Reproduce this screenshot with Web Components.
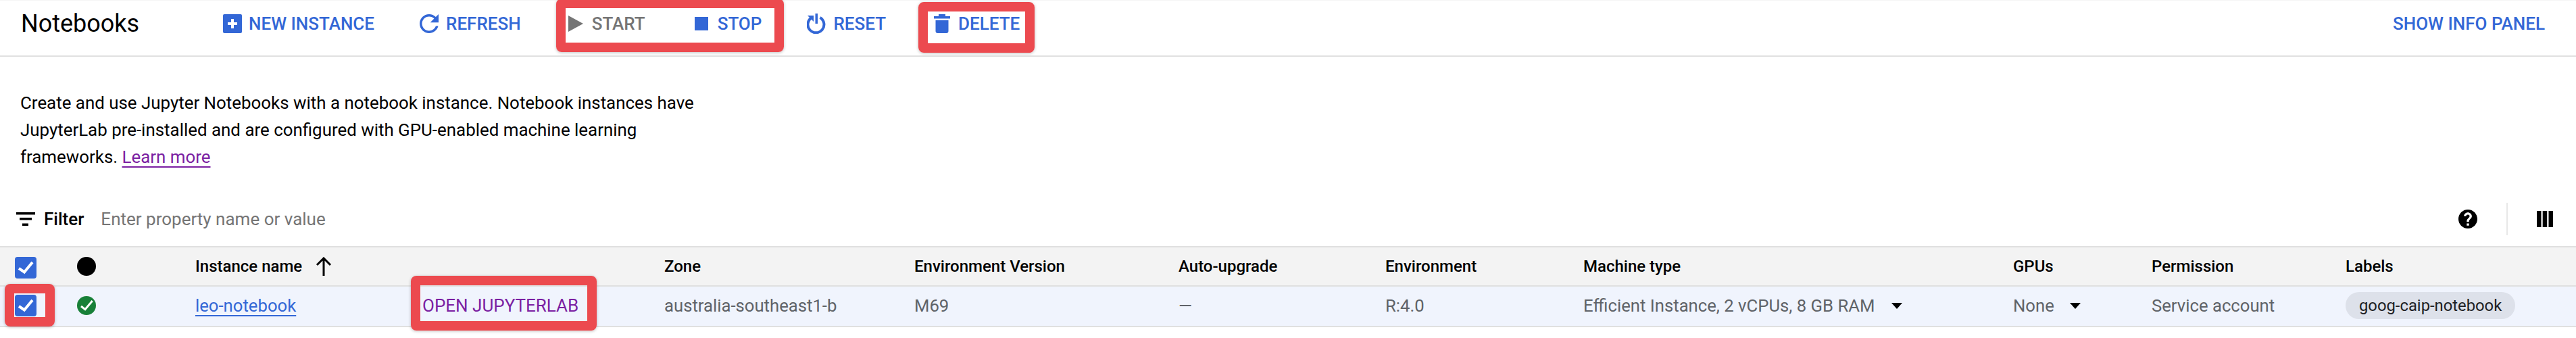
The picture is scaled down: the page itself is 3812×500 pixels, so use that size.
<!DOCTYPE html>
<html>
<head>
<meta charset="utf-8">
<title>Notebooks</title>
<style>
    html, body { margin: 0; padding: 0; background: #fff; }
    body { font-family: Roboto, "Liberation Sans", sans-serif; }
</style>
</head>
<body>
<notebooks-page>
    <np-toolbar>
        <np-action style="gap: 10px">
            <svg slot="icon" width="28" height="28" viewBox="0 0 28 28"><rect width="28" height="28" rx="2" fill="#3367d6"/><path d="M12 7h4v5h5v4h-5v5h-4v-5H7v-4h5z" fill="#fff"/></svg>
            NEW INSTANCE
        </np-action>
        <np-action style="margin-left: 67px">
            <svg slot="icon" width="28" height="28" viewBox="4 4 16 16"><path fill="#3367d6" d="M17.65 6.35C16.2 4.9 14.21 4 12 4c-4.42 0-7.99 3.58-7.99 8s3.57 8 7.99 8c3.73 0 6.84-2.55 7.73-6h-2.08c-.82 2.33-3.04 4-5.65 4-3.31 0-6-2.69-6-6s2.69-6 6-6c1.66 0 3.14.69 4.22 1.78L13 11h7V4l-2.35 2.35z"/></svg>
            REFRESH
        </np-action>
        <np-action disabled style="margin-left: 70px; gap: 13px">
            <svg slot="icon" width="22" height="24" viewBox="0 0 22 24"><path fill="#757575" d="M0 0l22 12L0 24z"/></svg>
            START
        </np-action>
        <np-action style="margin-left: 73px; gap: 14px">
            <svg slot="icon" width="20" height="20" viewBox="0 0 20 20"><rect width="20" height="20" fill="#3367d6"/></svg>
            STOP
        </np-action>
        <np-action style="margin-left: 67px">
            <svg slot="icon" width="28" height="30" viewBox="0 0 28 30"><path d="M19.5 6A12 12 0 1 1 7 6.2" fill="none" stroke="#3367d6" stroke-width="4"/><rect x="12.5" width="3.5" height="15" fill="#3367d6"/><path d="M1 3h9v9z" fill="#3367d6"/></svg>
            RESET
        </np-action>
        <np-action style="margin-left: 71px; gap: 12px">
            <svg slot="icon" width="24" height="28" viewBox="0 0 24 28"><path fill="#3367d6" d="M7 0h10v3h7v3.5H0V3h7zM2.5 9h19v16a3 3 0 0 1-3 3h-13a3 3 0 0 1-3-3z"/></svg>
            DELETE
        </np-action>
        <np-action slot="end">SHOW INFO PANEL</np-action>
    </np-toolbar>

    <np-intro>
        Create and use Jupyter Notebooks with a notebook instance. Notebook instances have<br>
        JupyterLab pre-installed and are configured with GPU-enabled machine learning<br>
        frameworks. <a href="#">Learn more</a>
    </np-intro>

    <np-filter></np-filter>

    <np-row head>
        <np-cell><np-check style="margin-top: 4px"></np-check></np-cell>
        <np-cell><np-status></np-status></np-cell>
        <np-cell>Instance name<svg width="24" height="28" viewBox="0 0 24 28" style="margin-left: 20px"><path d="M12 28V2M2 12L12 2l10 10" fill="none" stroke="#000" stroke-width="3"/></svg></np-cell>
        <np-cell></np-cell>
        <np-cell>Zone</np-cell>
        <np-cell>Environment Version</np-cell>
        <np-cell>Auto-upgrade</np-cell>
        <np-cell>Environment</np-cell>
        <np-cell>Machine type</np-cell>
        <np-cell>GPUs</np-cell>
        <np-cell>Permission</np-cell>
        <np-cell>Labels</np-cell>
    </np-row>
    <np-row>
        <np-cell><np-check></np-check></np-cell>
        <np-cell><np-status ok></np-status></np-cell>
        <np-cell><a href="#" style="color: #3367d6; text-decoration-thickness: 2px; text-underline-offset: 5px">leo-notebook</a></np-cell>
        <np-cell style="color: #7b1fa2; font-size: 26px">OPEN JUPYTERLAB</np-cell>
        <np-cell>australia-southeast1-b</np-cell>
        <np-cell>M69</np-cell>
        <np-cell>—</np-cell>
        <np-cell>R:4.0</np-cell>
        <np-cell>Efficient Instance, 2 vCPUs, 8 GB RAM<np-caret style="margin-left: 24px"></np-caret></np-cell>
        <np-cell>None<np-caret style="margin-left: 23px"></np-caret></np-cell>
        <np-cell>Service account</np-cell>
        <np-cell><np-chip>goog-caip-notebook</np-chip></np-cell>
    </np-row>

    <np-mark x="823" y="-2" w="337" h="79"></np-mark>
    <np-mark x="1359" y="3" w="172" h="75"></np-mark>
    <np-mark x="7" y="420" w="74" h="63"></np-mark>
    <np-mark x="608" y="408" w="275" h="81"></np-mark>
</notebooks-page>

<script>
class NotebooksPage extends HTMLElement {
    constructor() {
        super();
        this.attachShadow({ mode: "open" }).innerHTML = `
        <style>
            :host {
                display: block;
                position: relative;
                width: 3812px;
                height: 500px;
                overflow: hidden;
                font-family: Roboto, "Liberation Sans", sans-serif;
                font-size: 26px;
                color: #000;
            }
        </style>
        <slot></slot>
        `;
    }
}
customElements.define("notebooks-page", NotebooksPage);

class Toolbar extends HTMLElement {
    constructor() {
        super();
        this.attachShadow({ mode: "open" }).innerHTML = `
        <style>
            :host {
                display: flex;
                align-items: center;
                height: 67px;
                padding: 0 46px 14px 31px;
                border-top: 1px solid #f5f5f5;
                border-bottom: 2px solid #e0e0e0;
            }
            h1 {
                width: 299px;
                margin: 0;
                font-size: 36px;
                font-weight: 400;
                flex: none;
            }
            #end { margin-left: auto; }
        </style>
        <h1>Notebooks</h1>
        <slot></slot>
        <div id="end"><slot name="end"></slot></div>
        `;
    }
}
customElements.define("np-toolbar", Toolbar);

class Action extends HTMLElement {
    constructor() {
        super();
        this.attachShadow({ mode: "open" }).innerHTML = `
        <style>
            :host {
                display: inline-flex;
                align-items: center;
                gap: 11px;
                font-size: 26px;
                font-weight: 500;
                color: #3367d6;
                white-space: nowrap;
            }
            :host([disabled]) { color: #757575; }
            ::slotted(svg) { display: block; flex: none; }
        </style>
        <slot name="icon"></slot>
        <span><slot></slot></span>
        `;
    }
}
customElements.define("np-action", Action);

class Intro extends HTMLElement {
    constructor() {
        super();
        this.attachShadow({ mode: "open" }).innerHTML = `
        <style>
            :host {
                display: block;
                width: 1020px;
                padding: 48px 0 48px 30px;
                line-height: 40px;
                font-size: 25.900px;
            }
            ::slotted(a) { color: #7b1fa2; text-decoration-thickness: 2px; text-underline-offset: 5px; }
        </style>
        <slot></slot>
        `;
    }
}
customElements.define("np-intro", Intro);

class Filter extends HTMLElement {
    constructor() {
        super();
        this.attachShadow({ mode: "open" }).innerHTML = `
        <style>
            :host {
                display: flex;
                align-items: center;
                height: 48px;
                padding: 0 34px 0 24px;
                margin-bottom: 16px;
                font-size: 26px;
            }
            svg { display: block; flex: none; }
            b { font-weight: 500; margin-left: 13px; }
            span { color: #757575; margin-left: 25px; }
            #right { margin-left: auto; display: flex; align-items: center; gap: 43px; }
            i { display: block; width: 2px; height: 48px; background: #e8e8e8; }
        </style>
        <svg width="28" height="20" viewBox="0 0 28 20"><path d="M0 0h28v3.5H0zM5 8h18v3.500H5zM9 16.500h9V20H9z"/></svg>
        <b>Filter</b>
        <span>Enter property name or value</span>
        <div id="right">
            <svg width="28" height="28" viewBox="2 2 20 20"><path d="M12 2C6.48 2 2 6.48 2 12s4.48 10 10 10 10-4.48 10-10S17.52 2 12 2zm1.200 17h-2.400v-2.400h2.400v2.400zm2.070-7.750l-.9.920C13.650 12.900 13.200 13.500 13.200 15h-2.400v-.5c0-1.100.45-2.100 1.170-2.830l1.240-1.260c.37-.36.590-.86.590-1.410 0-.9-.7-1.600-1.800-1.600s-1.800.7-1.800 1.600H7.800c0-2.210 1.990-4 4.200-4s4.200 1.790 4.200 4c0 .88-.36 1.680-.93 2.250z"/></svg>
            <i></i>
            <svg width="24" height="24" viewBox="0 0 24 24"><path d="M0 0h6.500v24H0zM8.700 0h6.500v24H8.700zM17.500 0H24v24h-6.500z"/></svg>
        </div>
        `;
    }
}
customElements.define("np-filter", Filter);

class Row extends HTMLElement {
    constructor() {
        super();
        this.attachShadow({ mode: "open" }).innerHTML = `
        <style>
            :host {
                display: grid;
                grid-template-columns: 92px 175px 336px 358px 370px 391px 306px 293px 636px 205px 287px 1fr;
                align-items: center;
                height: 56px;
                padding: 0 0 2px 22px;
                background: #f0f4fd;
                border-bottom: 2px solid #e0e0e0;
                color: #5f6368;
                font-size: 25.700px;
            }
            :host([head]) {
                height: 56px;
                padding-bottom: 0;
                background: #f3f3f3;
                border-top: 2px solid #e0e0e0;
                color: #000;
                font-size: 24px;
                font-weight: 500;
            }
        </style>
        <slot></slot>
        `;
    }
}
customElements.define("np-row", Row);

class Cell extends HTMLElement {
    constructor() {
        super();
        this.attachShadow({ mode: "open" }).innerHTML = `
        <style>
            :host { display: flex; align-items: center; white-space: nowrap; min-width: 0; }
        </style>
        <slot></slot>
        `;
    }
}
customElements.define("np-cell", Cell);

class Check extends HTMLElement {
    constructor() {
        super();
        this.attachShadow({ mode: "open" }).innerHTML = `
        <style>
            :host { display: block; width: 32px; height: 32px; }
            svg { display: block; }
        </style>
        <svg width="32" height="32" viewBox="0 0 32 32"><rect width="32" height="32" rx="4" fill="#3367d6"/><path d="M6 17l8 5.500L26 8" fill="none" stroke="#fff" stroke-width="4"/></svg>
        `;
    }
}
customElements.define("np-check", Check);

class Status extends HTMLElement {
    constructor() {
        super();
        const ok = this.hasAttribute("ok");
        this.attachShadow({ mode: "open" }).innerHTML = `
        <style>
            :host { display: block; width: 28px; height: 28px; }
            svg { display: block; }
        </style>
        <svg width="28" height="28" viewBox="0 0 28 28">
            <circle cx="14" cy="14" r="14" fill="${ok ? "#188038" : "#000"}"/>
            ${ok ? '<path d="M6 15l6 4.700L22.700 7" fill="none" stroke="#fff" stroke-width="3"/>' : ""}
        </svg>
        `;
    }
}
customElements.define("np-status", Status);

class Caret extends HTMLElement {
    constructor() {
        super();
        this.attachShadow({ mode: "open" }).innerHTML = `
        <style>
            :host {
                display: inline-block;
                width: 0;
                height: 0;
                border-left: 8px solid transparent;
                border-right: 8px solid transparent;
                border-top: 9px solid #000;
            }
        </style>
        `;
    }
}
customElements.define("np-caret", Caret);

class Chip extends HTMLElement {
    constructor() {
        super();
        this.attachShadow({ mode: "open" }).innerHTML = `
        <style>
            :host {
                display: inline-flex;
                align-items: center;
                height: 40px;
                padding: 0 20px;
                border-radius: 20px;
                background: #dde1ea;
                color: #202124;
                font-size: 23.800px;
            }
        </style>
        <slot></slot>
        `;
    }
}
customElements.define("np-chip", Chip);

// red annotation frames drawn over the screenshot
class Mark extends HTMLElement {
    constructor() {
        super();
        this.attachShadow({ mode: "open" }).innerHTML = `
        <style>
            :host {
                position: absolute;
                box-sizing: border-box;
                border: 14px solid #ec4a4f;
                border-radius: 8px;
                box-shadow: 0 1px 4px rgba(0, 0, 0, 0.25);
            }
        </style>
        `;
    }
    connectedCallback() {
        this.style.left = this.getAttribute("x") + "px";
        this.style.top = this.getAttribute("y") + "px";
        this.style.width = this.getAttribute("w") + "px";
        this.style.height = this.getAttribute("h") + "px";
    }
}
customElements.define("np-mark", Mark);
</script>
</body>
</html>
